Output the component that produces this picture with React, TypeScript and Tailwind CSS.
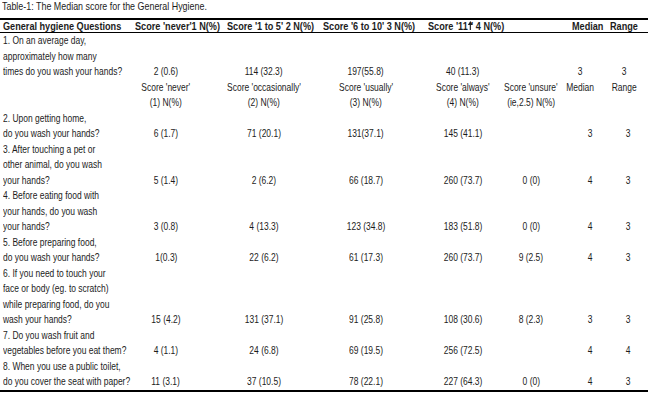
import React from "react";

const font = {
  fontFamily: '"Liberation Sans", Arial, sans-serif',
};

const cols = "grid grid-cols-[115px_102px_94px_110px_84px_52px_66px_10px]";

const rows: { q: string[]; v: string[] }[] = [
  {
    q: ["2. Upon getting home,", "do you wash your hands?"],
    v: ["6 (1.7)", "71 (20.1)", "131(37.1)", "145 (41.1)", "", "3", "3"],
  },
  {
    q: ["3. After touching a pet or", "other animal, do you wash", "your hands?"],
    v: ["5 (1.4)", "2 (6.2)", "66 (18.7)", "260 (73.7)", "0 (0)", "4", "3"],
  },
  {
    q: ["4. Before eating food with", "your hands, do you wash", "your hands?"],
    v: ["3 (0.8)", "4 (13.3)", "123 (34.8)", "183 (51.8)", "0 (0)", "4", "3"],
  },
  {
    q: ["5. Before preparing food,", "do you wash your hands?"],
    v: ["1(0.3)", "22 (6.2)", "61 (17.3)", "260 (73.7)", "9 (2.5)", "4", "3"],
  },
  {
    q: [
      "6. If you need to touch your",
      "face or body (eg. to scratch)",
      "while preparing food, do you",
      "wash your hands?",
    ],
    v: ["15 (4.2)", "131 (37.1)", "91 (25.8)", "108 (30.6)", "8 (2.3)", "3", "3"],
  },
  {
    q: ["7. Do you wash fruit and", "vegetables before you eat them?"],
    v: ["4 (1.1)", "24 (6.8)", "69 (19.5)", "256 (72.5)", "", "4", "4"],
  },
  {
    q: ["8. When you use a public toilet,", "do you cover the seat with paper?"],
    v: ["11 (3.1)", "37 (10.5)", "78 (22.1)", "227 (64.3)", "0 (0)", "4", "3"],
  },
];

// first question carries the score legend underneath its values
const first = [
  ["2 (0.6)", "Score 'never'", "(1) N(%)"],
  ["114 (32.3)", "Score 'occasionally'", "(2) N(%)"],
  ["197(55.8)", "Score 'usually'", "(3) N(%)"],
  ["40 (11.3)", "Score 'always'", "(4) N(%)"],
  ["", "Score 'unsure'", "(ie,2.5) N(%)"],
  ["3", "Median", ""],
  ["3", "Range", ""],
];

// the source uses a condensed face, squeeze Arial-metric text to match
function N({
  children,
  bold = false,
  left = false,
}: {
  children: React.ReactNode;
  bold?: boolean;
  left?: boolean;
}) {
  return (
    <span
      className={`inline-block whitespace-nowrap ${
        bold ? "scale-x-[0.83]" : "scale-x-[0.77]"
      } ${left ? "origin-left" : "origin-center"}`}
    >
      {children}
    </span>
  );
}

function UpArrow() {
  return (
    <svg
      width="6"
      height="9"
      viewBox="0 0 6 9"
      className="inline-block align-[0px] -mr-[2px]"
      fill="#1c1c1c"
    >
      <path d="M3 0 L6 4 L0 4 Z" />
      <rect x="2.3" y="3" width="1.4" height="6" />
    </svg>
  );
}

export default function App() {
  return (
    <div
      className="w-[650px] h-[400px] bg-white text-[#1c1c1c] text-[11px] leading-[15.5px] overflow-hidden"
      style={font}
    >
      <p className="h-[18px] pl-[2px] leading-[13px] whitespace-nowrap">
        <span className="inline-block scale-x-[0.81] origin-left">
          Table-1: The Median score for the General Hygiene.
        </span>
      </p>

      <div className="w-[648px] border-t-2 border-b border-black">
        <div className="flex h-[11px] mt-[1px] items-center leading-[11px] font-bold whitespace-nowrap">
          <span className="w-[135px] pl-[3px]">
            <N bold left>General hygiene Questions</N>
          </span>
          <span className="w-[92px]">
            <N bold left>Score 'never'1 N(%)</N>
          </span>
          <span className="w-[96px]">
            <N bold left>Score '1 to 5' 2 N(%)</N>
          </span>
          <span className="w-[105px]">
            <N bold left>Score '6 to 10' 3 N(%)</N>
          </span>
          <span className="w-[144px]">
            <N bold left>
              Score '11
              <UpArrow />' 4 N(%)
            </N>
          </span>
          <span className="w-[38px]">
            <N bold left>Median</N>
          </span>
          <span>
            <N bold left>Range</N>
          </span>
        </div>
      </div>

      <div className="w-[648px] border-b-2 border-black">
        <div className={cols}>
          <div className="pl-[3px] whitespace-nowrap">
            <div>
              <N left>1. On an average day,</N>
            </div>
            <div>
              <N left>approximately how many</N>
            </div>
            <div>
              <N left>times do you wash your hands?</N>
            </div>
          </div>
          {first.map((c, i) => (
            <div
              key={i}
              className={`flex flex-col items-center pt-[31px] whitespace-nowrap ${
                i === 5 ? "-translate-x-[10px]" : ""
              } ${i === 6 ? "-translate-x-[4px]" : ""}`}
            >
              {c.map((t, j) => (
                <div key={j} className="h-[15.5px]">
                  <N>{t}</N>
                </div>
              ))}
            </div>
          ))}
        </div>

        {rows.map((r, i) => (
          <div key={i} className={cols}>
            <div className="pl-[3px] whitespace-nowrap">
              {r.q.map((l, j) => (
                <div key={j}>
                  <N left>{l}</N>
                </div>
              ))}
            </div>
            {r.v.map((v, j) => (
              <div
                key={j}
                className="flex flex-col items-center justify-end whitespace-nowrap"
              >
                <div className="h-[15.5px]">
                  <N>{v}</N>
                </div>
              </div>
            ))}
          </div>
        ))}
      </div>
    </div>
  );
}
